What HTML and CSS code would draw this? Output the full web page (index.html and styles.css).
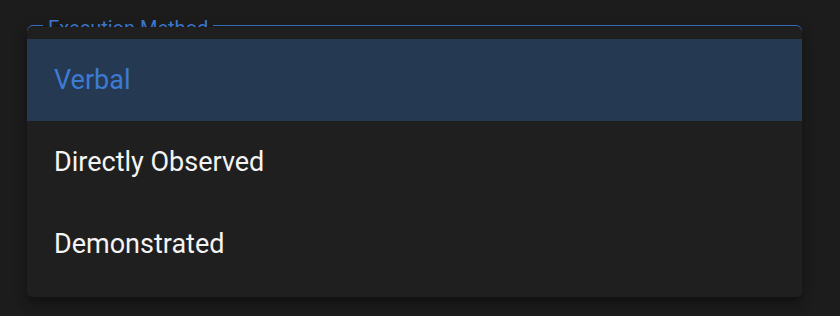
FILE: index.html
```html
<!DOCTYPE html>
<html lang="en">
<head>
<meta charset="utf-8">
<title>Execution Method</title>
<link rel="stylesheet" href="styles.css">
</head>
<body>
  <div class="page">
    <fieldset class="field">
      <legend class="field-label">Execution Method</legend>
    </fieldset>
    <ul class="menu" role="listbox">
      <li class="menu-item selected" role="option" aria-selected="true">Verbal</li>
      <li class="menu-item" role="option">Directly Observed</li>
      <li class="menu-item" role="option">Demonstrated</li>
    </ul>
  </div>
</body>
</html>
```
FILE: styles.css
```css
html, body {
  margin: 0;
  padding: 0;
  background: #1c1c1c;
  width: 840px;
  height: 316px;
  overflow: hidden;
  font-family: Roboto, "Liberation Sans", sans-serif;
}

.page {
  position: relative;
  width: 840px;
  height: 316px;
  padding-top: 11px;
  box-sizing: border-box;
}

.field {
  margin: 0 38px 0 27px;
  padding: 0 0 0 15px;
  height: 110px;
  box-sizing: border-box;
  border: 1px solid #3a72c2;
  border-radius: 6px;
  min-width: 0;
}

.field-label {
  padding: 6px 5px 0;
  font-size: 20px;
  color: #3d7bd3;
  line-height: 23px;
}

.menu {
  position: absolute;
  left: 27px;
  top: 27px;
  width: 775px;
  margin: 0;
  padding: 12px 0;
  list-style: none;
  background: #1f1f1f;
  border-radius: 5px;
  box-shadow: 0 5px 5px -3px rgba(0,0,0,.2), 0 8px 10px 1px rgba(0,0,0,.14), 0 3px 14px 2px rgba(0,0,0,.12);
}

.menu-item {
  display: flex;
  align-items: center;
  height: 82px;
  padding: 0 27px;
  font-size: 27px;
  line-height: 1.5;
  color: #f4f4f4;
}

.menu-item.selected {
  background: #253953;
  color: #3d7bd3;
}
```
